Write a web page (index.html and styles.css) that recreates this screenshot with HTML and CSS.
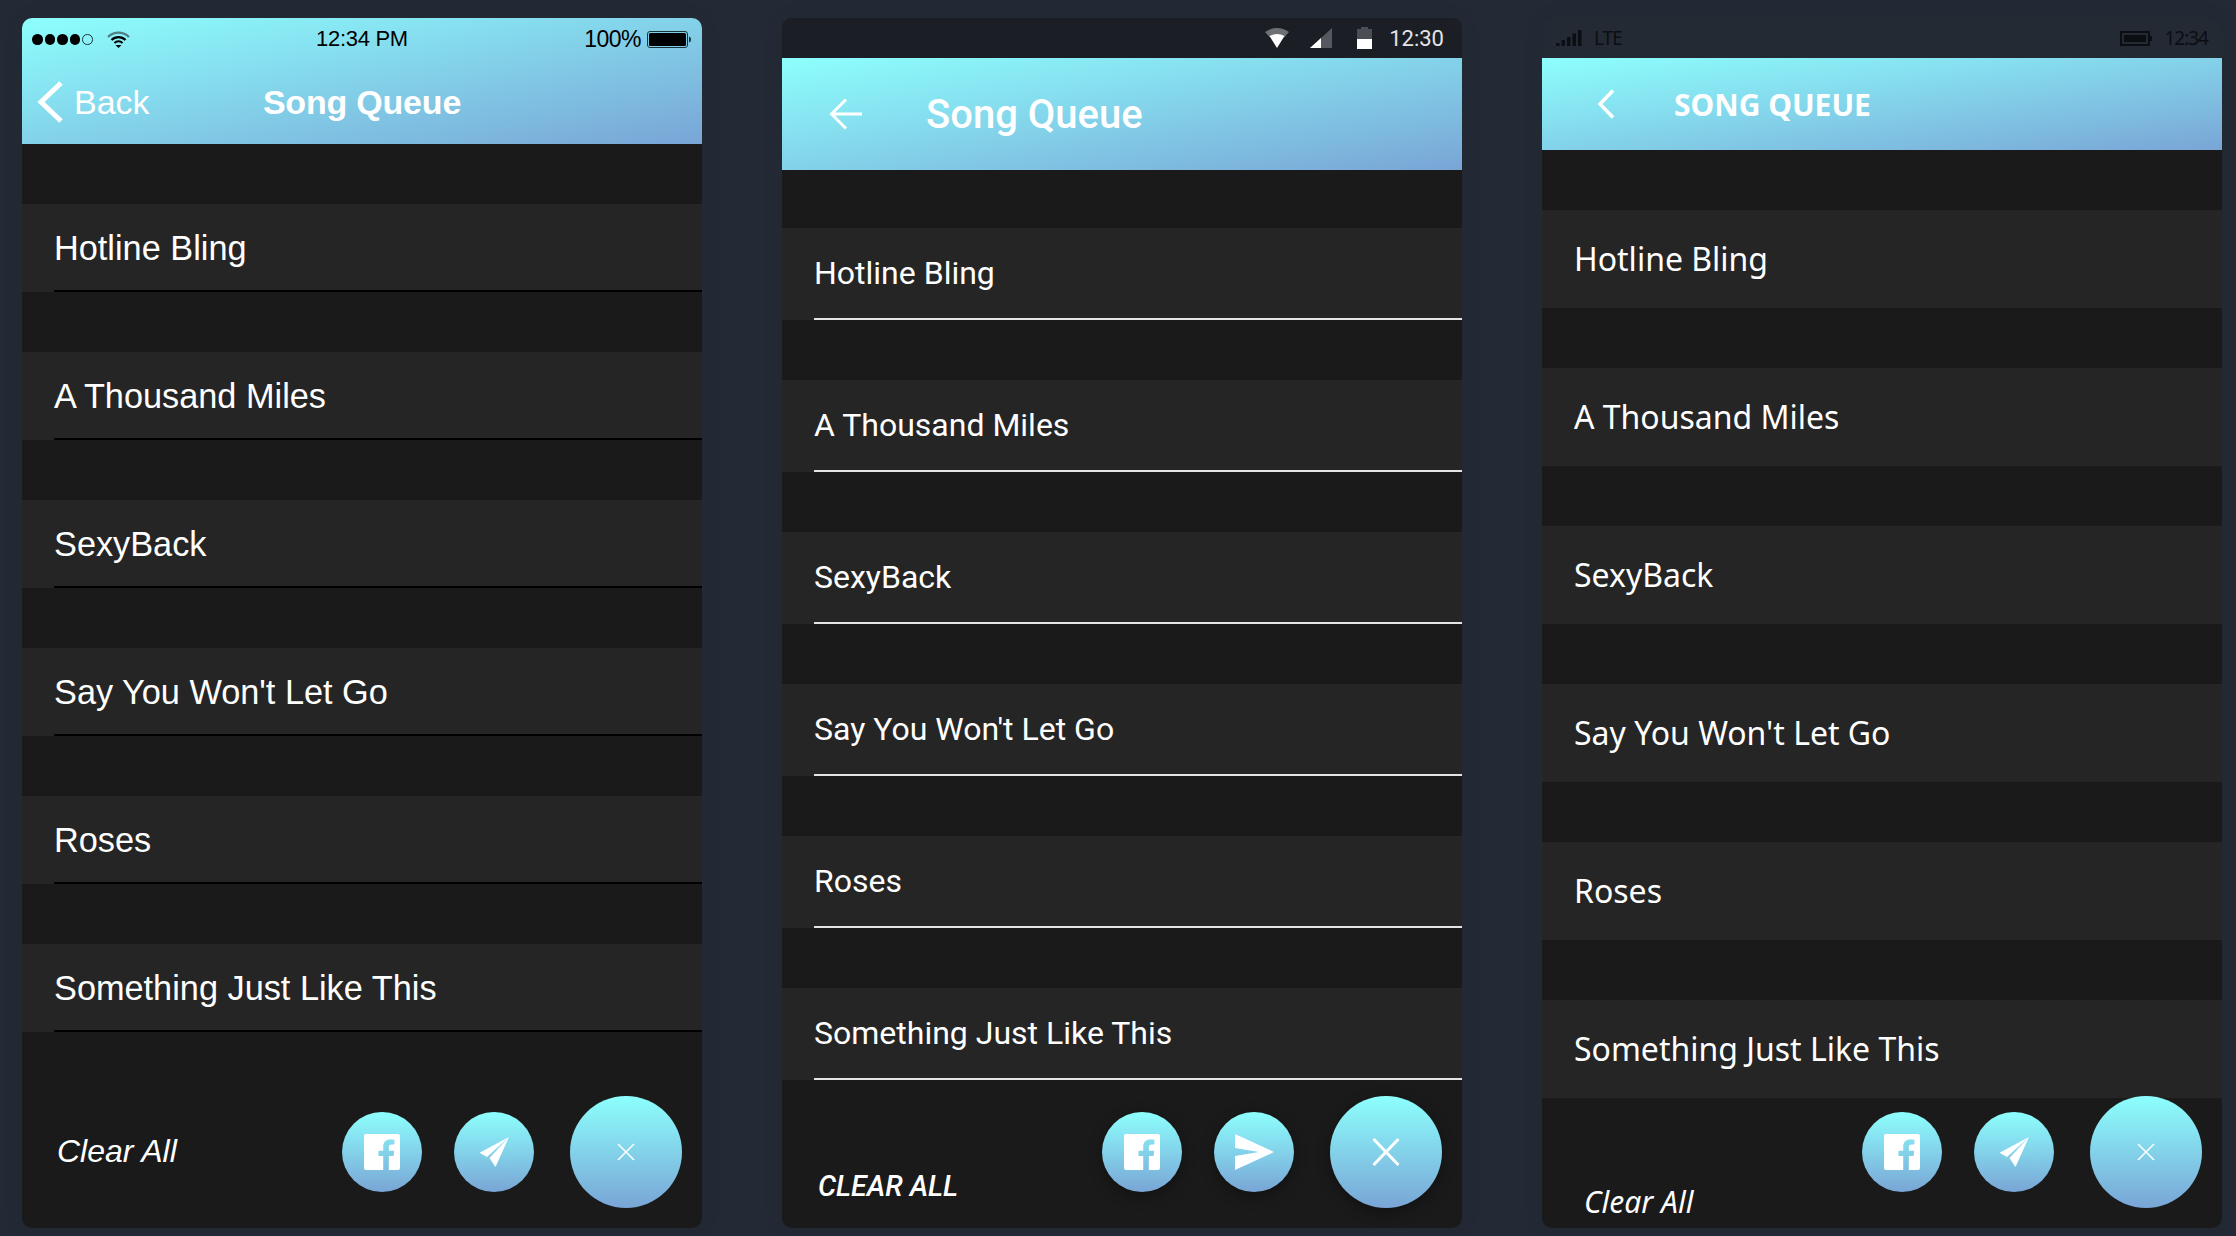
FILE: index.html
```html
<!DOCTYPE html>
<html lang="en">
<head>
  <meta charset="UTF-8" />
  <meta name="viewport" content="width=device-width, initial-scale=1.0"/>
  <title>Song Queue</title>
  <link rel="stylesheet" href="styles.css">
</head>
<body>
  <!-- iOS -->
  <div class="phone ios">
    <div class="top">
      <div class="status">
        <div class="status-left">
          <span class="dots"><i></i><i></i><i></i><i></i><i class="empty"></i></span>
          <svg class="wifi" width="23" height="17" viewBox="0 0 23 17">
            <path d="M1 6 A15 15 0 0 1 22 6" fill="none" stroke="#4d7f85" stroke-width="2.2"/>
            <path d="M4.5 9 A10 10 0 0 1 18.500 9" fill="none" stroke="#000" stroke-width="2.2"/>
            <path d="M7.500 12 A6 6 0 0 1 15.500 12" fill="none" stroke="#000" stroke-width="2.200"/>
            <path d="M8.500 14 h6 l-3 3 z" fill="#000"/>
          </svg>
        </div>
        <span class="time">12:34 PM</span>
        <div class="status-right">
          <span>100%</span>
          <svg width="44" height="17" viewBox="0 0 44 17">
            <rect x="0.500" y="0.500" width="40" height="16" rx="2.500" fill="none" stroke="#1a3338"/>
            <rect x="2" y="2" width="37" height="13" rx="1.500" fill="#000"/>
            <path d="M42 5.500 c1.500 .5 2 1.500 2 3 s-.5 2.500 -2 3 z" fill="#1a3338"/>
          </svg>
        </div>
      </div>
      <div class="nav">
        <div class="back">
          <svg width="28" height="42" viewBox="0 0 28 42">
            <polyline points="25,2 5,21 25,40" fill="none" stroke="#fff" stroke-width="5"/>
          </svg>
          <span>Back</span>
        </div>
        <div class="title">Song Queue</div>
      </div>
    </div>
    <div class="songs">
      <div class="song"><span>Hotline Bling</span></div>
      <div class="song"><span>A Thousand Miles</span></div>
      <div class="song"><span>SexyBack</span></div>
      <div class="song"><span>Say You Won't Let Go</span></div>
      <div class="song"><span>Roses</span></div>
      <div class="song"><span>Something Just Like This</span></div>
    </div>
    <div class="footer"><span class="clear">Clear All</span></div>
    <div class="actions">
      <div class="fab">
        <svg width="36" height="36" viewBox="0 0 24 24"><path fill="#fff" d="M22.675 0H1.325C.593 0 0 .593 0 1.325v21.351C0 23.407.593 24 1.325 24H12.820v-9.294H9.692v-3.622h3.128V8.413c0-3.100 1.893-4.788 4.659-4.788 1.325 0 2.463.099 2.795.143v3.240l-1.918.001c-1.504 0-1.795.715-1.795 1.763v2.313h3.587l-.467 3.622h-3.120V24h6.116c.730 0 1.323-.593 1.323-1.325V1.325C24 .593 23.407 0 22.675 0z"/></svg>
      </div>
      <div class="fab">
        <svg width="80" height="80" viewBox="0 0 80 80"><path fill="#fff" d="M55 25 L25.500 40.700 L33 45 Z M55 25 L35.500 46 L41.500 55 Z"/></svg>
      </div>
      <div class="fab big">
        <svg width="18" height="18" viewBox="0 0 18 18"><path d="M1 1 L17 17 M17 1 L1 17" stroke="#fff" stroke-width="1.500"/></svg>
      </div>
    </div>
  </div>

  <!-- Android -->
  <div class="phone android">
    <div class="status">
      <svg width="24" height="20" viewBox="0 0 24 20">
        <path d="M0 4 Q12 -4 24 4 L19.500 9 H4.500 Z" fill="#6d7075"/>
        <path d="M4.500 8 Q12 4 19.500 8 L12 20 Z" fill="#fff"/>
      </svg>
      <svg class="signal" width="22" height="20" viewBox="0 0 22 20">
        <path d="M22 0 V20 H0 Z" fill="#55585e"/>
        <path d="M11 10 V20 H0 Z" fill="#fff"/>
      </svg>
      <svg class="battery" width="15" height="22" viewBox="0 0 15 22">
        <path d="M4 0 H11 V2 H15 V12 H0 V2 H4 Z" fill="#4b4e54"/>
        <rect y="12" width="15" height="10" fill="#fff"/>
      </svg>
      <span class="time">12:30</span>
    </div>
    <div class="top">
      <svg class="arrow" width="34" height="32" viewBox="0 0 34 32">
        <path d="M33 16 H3 M17 1.500 L2.500 16 L17 30.500" fill="none" stroke="#fff" stroke-width="3"/>
      </svg>
      <div class="title">Song Queue</div>
    </div>
    <div class="songs">
      <div class="song"><span>Hotline Bling</span></div>
      <div class="song"><span>A Thousand Miles</span></div>
      <div class="song"><span>SexyBack</span></div>
      <div class="song"><span>Say You Won't Let Go</span></div>
      <div class="song"><span>Roses</span></div>
      <div class="song"><span>Something Just Like This</span></div>
    </div>
    <div class="footer"><span class="clear">CLEAR ALL</span></div>
    <div class="actions">
      <div class="fab">
        <svg width="36" height="36" viewBox="0 0 24 24"><path fill="#fff" d="M22.675 0H1.325C.593 0 0 .593 0 1.325v21.351C0 23.407.593 24 1.325 24H12.820v-9.294H9.692v-3.622h3.128V8.413c0-3.100 1.893-4.788 4.659-4.788 1.325 0 2.463.099 2.795.143v3.240l-1.918.001c-1.504 0-1.795.715-1.795 1.763v2.313h3.587l-.467 3.622h-3.120V24h6.116c.730 0 1.323-.593 1.323-1.325V1.325C24 .593 23.407 0 22.675 0z"/></svg>
      </div>
      <div class="fab">
        <svg class="send" width="39" height="36" viewBox="0 0 39 36"><path fill="#fff" d="M0 0 L39 18 L0 36 V22 L24 18 L0 14 Z"/></svg>
      </div>
      <div class="fab big">
        <svg width="28" height="28" viewBox="0 0 28 28"><path d="M1.500 1 L26.500 27 M26.500 1 L1.500 27" stroke="#fff" stroke-width="3"/></svg>
      </div>
    </div>
  </div>

  <!-- Windows -->
  <div class="phone windows">
    <div class="status">
      <div class="status-left">
        <svg width="26" height="16" viewBox="0 0 26 16" fill="#0b0e12">
          <rect x="0" y="13" width="3.500" height="3"/>
          <rect x="5.500" y="10" width="3.500" height="6"/>
          <rect x="11" y="7" width="3.500" height="9"/>
          <rect x="16.500" y="3.500" width="3.500" height="12.500"/>
          <rect x="22" y="0" width="3.500" height="16"/>
        </svg>
        <span>LTE</span>
      </div>
      <div class="status-right">
        <svg width="32" height="15" viewBox="0 0 32 15">
          <rect x="1" y="1" width="28" height="13" fill="none" stroke="#0b0e12" stroke-width="2"/>
          <rect x="4" y="4" width="22" height="7" fill="#0b0e12"/>
          <rect x="30" y="5" width="2" height="5" fill="#0b0e12"/>
        </svg>
        <span>12:34</span>
      </div>
    </div>
    <div class="top">
      <svg class="chevron" width="18" height="30" viewBox="0 0 18 30">
        <polyline points="16,1.500 3,15 16,28.500" fill="none" stroke="#fff" stroke-width="3.500"/>
      </svg>
      <div class="title">SONG QUEUE</div>
    </div>
    <div class="songs">
      <div class="song"><span>Hotline Bling</span></div>
      <div class="song"><span>A Thousand Miles</span></div>
      <div class="song"><span>SexyBack</span></div>
      <div class="song"><span>Say You Won't Let Go</span></div>
      <div class="song"><span>Roses</span></div>
      <div class="song"><span>Something Just Like This</span></div>
    </div>
    <div class="footer"><span class="clear">Clear All</span></div>
    <div class="actions">
      <div class="fab">
        <svg width="36" height="36" viewBox="0 0 24 24"><path fill="#fff" d="M22.675 0H1.325C.593 0 0 .593 0 1.325v21.351C0 23.407.593 24 1.325 24H12.820v-9.294H9.692v-3.622h3.128V8.413c0-3.100 1.893-4.788 4.659-4.788 1.325 0 2.463.099 2.795.143v3.240l-1.918.001c-1.504 0-1.795.715-1.795 1.763v2.313h3.587l-.467 3.622h-3.120V24h6.116c.730 0 1.323-.593 1.323-1.325V1.325C24 .593 23.407 0 22.675 0z"/></svg>
      </div>
      <div class="fab">
        <svg width="80" height="80" viewBox="0 0 80 80"><path fill="#fff" d="M55 25 L25.500 40.700 L33 45 Z M55 25 L35.500 46 L41.500 55 Z"/></svg>
      </div>
      <div class="fab big">
        <svg width="18" height="18" viewBox="0 0 18 18"><path d="M1 1 L17 17 M17 1 L1 17" stroke="#fff" stroke-width="1.500"/></svg>
      </div>
    </div>
  </div>
</body>
</html>
```

FILE: styles.css
```css
body {
  margin: 0;
  padding: 18px 0 0 22px;
  height: 1236px;
  box-sizing: border-box;
  overflow: hidden;
  display: flex;
  gap: 80px;
  background: #232a35;
  color: #fff;
}

.phone {
  position: relative;
  width: 680px;
  height: 1210px;
  display: flex;
  flex-direction: column;
  flex-shrink: 0;
  background: #1a1a1a;
  border-radius: 10px;
  overflow: hidden;
  box-shadow: 0 0 24px rgba(0,0,0,0.05);
}

.top {
  background: linear-gradient(to bottom right, #8dfffd, #79a5d6);
  flex-shrink: 0;
}

.songs {
  display: flex;
  flex-direction: column;
  gap: 60px;
  padding-top: 60px;
}

.song {
  display: flex;
  background: #252525;
}

.song span {
  flex: 1;
  display: flex;
  align-items: center;
  margin-left: 32px;
}

.footer {
  flex: 1;
  display: flex;
  align-items: flex-end;
}

.clear {
  font-style: italic;
}

/* buttons sit over the list and footer */
.actions {
  position: absolute;
  right: 20px;
  bottom: 20px;
  display: flex;
  align-items: center;
}

.fab {
  width: 80px;
  height: 80px;
  border-radius: 50%;
  display: flex;
  align-items: center;
  justify-content: center;
  background: linear-gradient(to bottom, #8dfffd, #79a5d6);
}

.fab + .fab {
  margin-left: 32px;
}

.fab.big {
  width: 112px;
  height: 112px;
  margin-left: 36px;
}

/* iOS */
.ios {
  font-family: "Liberation Sans", Arial, sans-serif;
}

.ios .status {
  height: 42px;
  position: relative;
  display: flex;
  align-items: center;
  justify-content: center;
  color: #000;
}

.ios .status-left {
  position: absolute;
  left: 10px;
  top: 13px;
  display: flex;
  align-items: center;
  gap: 14px;
}

.ios .status-right {
  position: absolute;
  right: 11px;
  top: 8px;
  display: flex;
  align-items: center;
  gap: 6px;
  font-size: 23px;
  letter-spacing: -0.5px;
}

.dots {
  display: flex;
  gap: 2px;
}

.dots i {
  width: 10.500px;
  height: 10.500px;
  border-radius: 50%;
  background: #000;
}

.dots i.empty {
  background: none;
  width: 8.500px;
  height: 8.500px;
  border: 1px solid #1a3338;
}

.ios .time {
  font-size: 22px;
  letter-spacing: -0.3px;
}

.nav {
  height: 84px;
  position: relative;
  display: flex;
  align-items: center;
  justify-content: center;
}

.back {
  position: absolute;
  left: 14px;
  top: 21px;
  display: flex;
  align-items: center;
  gap: 10px;
  font-size: 34px;
}

.ios .title {
  font-size: 34px;
  font-weight: bold;
  letter-spacing: -0.2px;
}

.ios .song {
  height: 88px;
  font-size: 34.300px;
}

.ios .song span {
  border-bottom: 2px solid #000;
  padding-top: 2px;
}

.ios .footer {
  padding: 0 0 58px 35px;
}

.ios .clear {
  font-size: 32px;
}

/* Android */
.android {
  font-family: Roboto, sans-serif;
}

.android .status {
  height: 40px;
  background: #1b1e24;
  display: flex;
  align-items: center;
  justify-content: flex-end;
  padding-right: 18px;
}

.android .signal {
  margin-left: 21px;
}

.android .battery {
  margin-left: 25px;
}

.android .time {
  font-size: 22px;
  margin-left: 17px;
  color: #e4e4e4;
}

.android .top {
  height: 112px;
  display: flex;
  align-items: center;
  padding-left: 47px;
}

.android .title {
  font-size: 40px;
  font-weight: 500;
  margin-left: 63px;
}

.android .songs {
  padding-top: 58px;
}

.android .song {
  height: 92px;
  font-size: 32px;
}

.android .song span {
  border-bottom: 2px solid #e4e4e4;
}

.android .footer {
  padding: 0 0 25px 36px;
}

.android .clear {
  font-size: 28.600px;
  font-weight: 500;
}

.android .fab {
  box-shadow: 0 4px 14px rgba(0,0,0,0.35);
}

/* Windows */
.windows {
  font-family: "Noto Sans", sans-serif;
}

.windows .status {
  height: 40px;
  background: #232a33;
  display: flex;
  align-items: center;
  justify-content: space-between;
  padding: 0 14px;
  color: #0b0e12;
  font-size: 19px;
}

.windows .status-left,
.windows .status-right {
  display: flex;
  align-items: center;
  gap: 12px;
  letter-spacing: -1px;
}

.windows .top {
  height: 92px;
  display: flex;
  align-items: center;
  padding-left: 55px;
}

.windows .title {
  font-size: 30px;
  font-weight: bold;
  margin-left: 59px;
}

.windows .song {
  height: 98px;
  font-size: 32px;
}

.windows .song span {
  padding-bottom: 2px;
}

.windows .footer {
  padding: 0 0 6px 42px;
}

.windows .clear {
  font-size: 30px;
}
```
